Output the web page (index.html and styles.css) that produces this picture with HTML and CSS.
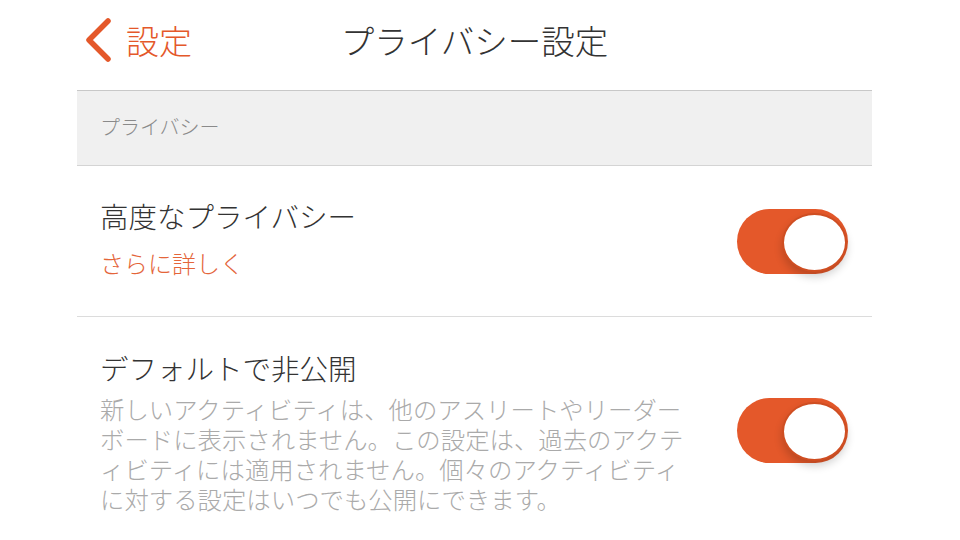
FILE: index.html
```html
<!DOCTYPE html>
<html lang="ja">
<head>
    <meta charset="UTF-8">
    <meta name="viewport" content="width=device-width, initial-scale=1.0">
    <title>プライバシー設定</title>
    <link rel="stylesheet" href="styles.css">
</head>
<body>
    <div class="screen">
        <header class="nav">
            <a class="back" href="#">
                <svg class="back-icon" width="30" height="44" viewBox="0 0 30 44">
                    <polyline points="25,3 6,22 25,41" fill="none" stroke="#e4582a" stroke-width="5.5" stroke-linecap="round" stroke-linejoin="round"/>
                </svg>
                <span>設定</span>
            </a>
            <h1 class="nav-title">プライバシー設定</h1>
            <div></div>
        </header>

        <div class="section-header">プライバシー</div>

        <div class="row">
            <div class="row-text">
                <div class="row-title">高度なプライバシー</div>
                <a class="row-link" href="#">さらに詳しく</a>
            </div>
            <label class="toggle">
                <input type="checkbox" checked>
                <span class="knob"></span>
            </label>
        </div>

        <div class="row row-last">
            <div class="row-text">
                <div class="row-title">デフォルトで非公開</div>
                <p class="row-desc">新しいアクティビティは、他のアスリートやリーダーボードに表示されません。この設定は、過去のアクティビティには適用されません。個々のアクティビティに対する設定はいつでも公開にできます。</p>
            </div>
            <label class="toggle">
                <input type="checkbox" checked>
                <span class="knob"></span>
            </label>
        </div>
    </div>
</body>
</html>
```

FILE: styles.css
```css
body {
    margin: 0;
    padding: 0;
    background-color: #fff;
    font-family: "Noto Sans CJK JP", "Noto Sans", sans-serif;
    font-weight: 300;
    color: #333;
    overflow: hidden;
}
.screen {
    width: 795px;
    margin-left: 77px;
}
.nav {
    height: 90px;
    display: grid;
    grid-template-columns: 1fr auto 1fr;
    align-items: center;
    padding-bottom: 10px;
    box-sizing: border-box;
}
.back {
    display: flex;
    align-items: center;
    gap: 13px;
    padding-left: 6px;
    color: #e4582a;
    font-size: 33px;
    text-decoration: none;
    line-height: 1;
}
.back-icon {
    display: block;
}
.nav-title {
    margin: 0;
    font-size: 33.5px;
    font-weight: 300;
    color: #333;
    line-height: 1;
}
.section-header {
    height: 76px;
    box-sizing: border-box;
    display: flex;
    align-items: center;
    padding: 0 0 4px 23px;
    background-color: #f0f0f0;
    border-top: 1px solid #c8c8c8;
    border-bottom: 1px solid #d4d4d4;
    font-size: 20px;
    color: #8a8a8a;
}
.row {
    display: flex;
    align-items: center;
    justify-content: space-between;
    height: 151px;
    box-sizing: border-box;
    padding: 0 24px 0 23px;
    border-bottom: 1px solid #dcdcdc;
}
.row-last {
    height: auto;
    padding-top: 29px;
    padding-bottom: 20px;
    border-bottom: none;
}
.row-title {
    font-size: 28.5px;
    line-height: 44px;
    color: #333;
}
.row-link {
    display: block;
    font-size: 24px;
    line-height: 50px;
    color: #e4653a;
    text-decoration: none;
}
.row-desc {
    margin: 4px 0 0;
    max-width: 24.3em;
    font-size: 24.4px;
    line-height: 30px;
    color: #aaa;
    line-break: loose;
}
.toggle {
    position: relative;
    flex: none;
    width: 111px;
    height: 65px;
    border-radius: 33px;
    background-color: #e4582a;
    cursor: pointer;
}
.toggle input {
    display: none;
}
.knob {
    position: absolute;
    right: 1px;
    top: 4px;
    width: 61px;
    height: 55px;
    border-radius: 50%;
    background-color: #fff;
    border: 2px solid #cf4e22;
    box-shadow: 0 5px 8px rgba(0, 0, 0, 0.18);
}
```
